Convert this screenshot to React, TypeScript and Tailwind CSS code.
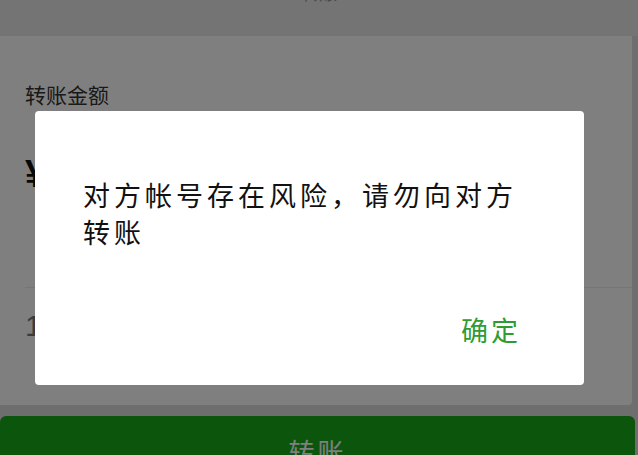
import React from 'react';

const cjk = { fontFamily: '"Noto Sans CJK SC", "Noto Sans", sans-serif' };

export default function App() {
  return (
    <div className="relative h-[455px] w-[638px] overflow-hidden bg-[#dcdcdc]" style={cjk}>
      {/* header */}
      <div className="flex h-[36px] justify-center bg-[#e8e8e8]">
        <span className="-mt-[22px] text-[18px] leading-[28px] text-[#999]">转账</span>
      </div>

      {/* amount card */}
      <div className="flex h-[369px] w-[632px] flex-col rounded-br-[4px] bg-white pl-[25px] pt-[44px]">
        <div className="text-[21px] leading-[28px] text-[#333]">转账金额</div>
        <div className="mt-[44px] flex h-[44px] items-center font-['Liberation_Sans'] text-[38px] font-semibold text-[#111]">
          ¥
        </div>
        <div className="h-[92px] border-b border-[#ececec]" />
        <div className="mt-[20px] font-['Liberation_Sans'] text-[30px] leading-[36px] text-[#777]">1</div>
      </div>

      {/* submit button */}
      <div className="mt-[11px] flex h-[60px] w-[635px] justify-center rounded-t-[6px] bg-[#18ab18] pt-[18px]">
        <span className="text-[26px] leading-[34px] tracking-[3px] text-white">转账</span>
      </div>

      {/* mask */}
      <div className="absolute inset-0 bg-black/50" />

      {/* alert dialog */}
      <div className="absolute left-[35px] top-[111px] flex h-[274px] w-[549px] flex-col rounded-[4px] bg-white">
        <p className="px-[48px] pt-[65px] text-[27px] leading-[37px] tracking-[4px] text-[#111]">
          对方帐号存在风险，请勿向对方转账
        </p>
        <div className="mt-auto flex justify-end pb-[37px] pr-[63px]">
          <span className="text-[27px] leading-[37px] tracking-[3px] text-[#2f9b34]">确定</span>
        </div>
      </div>
    </div>
  );
}
